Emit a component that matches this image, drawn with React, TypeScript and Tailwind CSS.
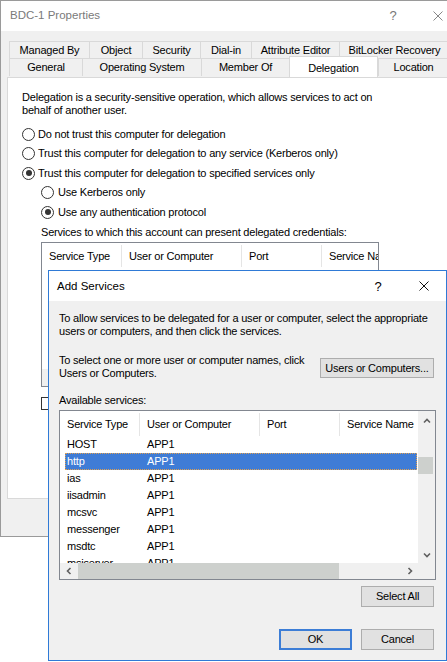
import React from "react";

const rows = [
  "HOST",
  "http",
  "ias",
  "iisadmin",
  "mcsvc",
  "messenger",
  "msdtc",
  "msiserver",
];

const Radio = ({ checked }: { checked?: boolean }) => (
  <span className="flex h-[13px] w-[13px] shrink-0 items-center justify-center rounded-full border border-[#333] bg-white">
    {checked && <span className="h-[6px] w-[6px] rounded-full bg-[#333]" />}
  </span>
);

const CloseIcon = () => (
  <svg width="10" height="10" viewBox="0 0 10 10">
    <path d="M0.5 0.5 L9.5 9.5 M9.5 0.5 L0.5 9.5" stroke="#111" strokeWidth="1" />
  </svg>
);

const Chevron = ({ dir }: { dir: "up" | "down" | "left" | "right" }) => {
  const d = {
    up: "M1 5.5 L4 2.5 L7 5.5",
    down: "M1 2.5 L4 5.5 L7 2.5",
    left: "M5.5 1 L2.5 4 L5.5 7",
    right: "M2.5 1 L5.5 4 L2.5 7",
  }[dir];
  return (
    <svg width="8" height="8" viewBox="0 0 8 8">
      <path d={d} fill="none" stroke="#606060" strokeWidth="1.6" />
    </svg>
  );
};

const Tab = ({ label, w, h }: { label: string; w: string; h: string }) => (
  <div
    className={`${w} ${h} flex shrink-0 items-center justify-center border-l border-t border-[#d9d9d9] whitespace-nowrap`}
  >
    {label}
  </div>
);

const Button = ({ label, w, primary }: { label: string; w: string; primary?: boolean }) => (
  <div
    className={`${w} flex h-[21px] items-center justify-center bg-[#e1e1e1] ${
      primary ? "border-2 border-[#3c7dd6]" : "border border-[#adadad]"
    }`}
  >
    {label}
  </div>
);

const columns = [
  ["Service Type", "w-[80px]"],
  ["User or Computer", "w-[120px]"],
  ["Port", "w-[80px]"],
  ["Service Name", "w-[80px]"],
];

export default function App() {
  return (
    <div className="relative h-[662px] w-[447px] overflow-hidden bg-white font-['Liberation_Sans',Arial,sans-serif] text-[11px] tracking-[-0.2px] text-black">
      {/* BDC-1 Properties */}
      <div className="flex h-[537px] w-[470px] flex-col border border-[#9a9a9a] bg-[#f0f0f0]">
        <div className="flex h-[30px] shrink-0 items-center bg-white pl-[9px] pr-[21px] text-[11.5px] tracking-normal text-[#7a7a7a]">
          BDC-1 Properties
          <div className="ml-auto flex items-center gap-[25px]">
            <span className="flex w-[20px] justify-center text-[13px] text-[#777]">?</span>
            <span className="flex w-[20px] justify-center opacity-50">
              <CloseIcon />
            </span>
          </div>
        </div>

        <div className="pl-[8px] pt-[10px]">
          <div className="flex">
            <Tab label="Managed By" w="w-[80px]" h="h-[17px]" />
            <Tab label="Object" w="w-[53px]" h="h-[17px]" />
            <Tab label="Security" w="w-[58px]" h="h-[17px]" />
            <Tab label="Dial-in" w="w-[51px]" h="h-[17px]" />
            <Tab label="Attribute Editor" w="w-[88px]" h="h-[17px]" />
            <Tab label="BitLocker Recovery" w="w-[110px]" h="h-[17px]" />
          </div>
          <div className="flex">
            <Tab label="General" w="w-[73px]" h="h-[18px]" />
            <Tab label="Operating System" w="w-[119px]" h="h-[18px]" />
            <Tab label="Member Of" w="w-[88px]" h="h-[18px]" />
            <div className="relative z-10 -mt-[2px] flex h-[21px] w-[89px] shrink-0 items-start justify-center border-x border-t border-[#d9d9d9] bg-white pt-[3px]">
              Delegation
            </div>
            <Tab label="Location" w="w-[70px]" h="h-[18px]" />
          </div>
        </div>

        <div className="ml-[6px] flex h-[422px] flex-col border border-[#d9d9d9] bg-white pl-[14px] pt-[13px] leading-[13px]">
          <p className="whitespace-nowrap">
            Delegation is a security-sensitive operation, which allows services to act on
            <br />
            behalf of another user.
          </p>
          <div className="mt-[7px] flex flex-col whitespace-nowrap">
            <label className="flex h-[20px] items-center gap-[3px]">
              <Radio />
              Do not trust this computer for delegation
            </label>
            <label className="flex h-[19px] items-center gap-[3px]">
              <Radio />
              Trust this computer for delegation to any service (Kerberos only)
            </label>
            <label className="flex h-[20px] items-center gap-[3px]">
              <Radio checked />
              Trust this computer for delegation to specified services only
            </label>
            <label className="ml-[19px] flex h-[19px] items-center gap-[4px]">
              <Radio />
              Use Kerberos only
            </label>
            <label className="ml-[19px] flex h-[20px] items-center gap-[4px]">
              <Radio checked />
              Use any authentication protocol
            </label>
          </div>

          <div className="ml-[19px] mt-[4px]">
            <div className="whitespace-nowrap">
              Services to which this account can present delegated credentials:
            </div>
            <div className="mt-[3px] flex h-[145px] w-[338px] flex-col overflow-hidden border border-[#828790]">
              <div className="flex h-[26px] whitespace-nowrap">
                {columns.map(([t, w]) => (
                  <div key={t} className={`${w} flex shrink-0 items-center overflow-hidden pl-[7px]`}>
                    <span className="flex h-[22px] flex-1 items-center border-r border-[#e5e5e5]">{t}</span>
                  </div>
                ))}
              </div>
              <div className="flex-1" />
              <div className="h-[17px] bg-[#f0f0f0]" />
            </div>
            <div className="mt-[10px] h-[13px] w-[13px] border border-[#333] bg-white" />
          </div>
        </div>
      </div>

      {/* Add Services dialog */}
      <div className="absolute left-[48px] top-[270px] flex h-[391px] w-[399px] flex-col border border-[#2f7ad6] bg-[#f0f0f0] leading-[13px]">
        <div className="flex h-[30px] shrink-0 items-center bg-white pl-[8px] pr-[12px] text-[11.5px] tracking-normal">
          Add Services
          <div className="ml-auto flex items-center gap-[26px]">
            <span className="flex w-[20px] justify-center text-[13px]">?</span>
            <span className="flex w-[20px] justify-center">
              <CloseIcon />
            </span>
          </div>
        </div>

        <div className="flex flex-1 flex-col px-[10px] pt-[11px]">
          <p className="whitespace-nowrap">
            To allow services to be delegated for a user or computer, select the appropriate
            <br />
            users or computers, and then click the services.
          </p>
          <div className="mt-[16px] flex items-start justify-between">
            <p className="whitespace-nowrap">
              To select one or more user or computer names, click
              <br />
              Users or Computers.
            </p>
            <div className="mr-[2px] mt-[4px] flex h-[20px] w-[114px] items-center justify-center border border-[#adadad] bg-[#e1e1e1]">
              Users or Computers...
            </div>
          </div>
          <div className="mt-[14px]">Available services:</div>

          <div className="mt-[3px] flex h-[170px] flex-col border border-[#828790] bg-white">
            <div className="flex flex-1 overflow-hidden">
              <div className="flex-1 overflow-hidden whitespace-nowrap">
                <div className="flex h-[25px]">
                  {columns.map(([t, w]) => (
                    <div key={t} className={`${w} flex shrink-0 items-end pl-[7px]`}>
                      <span className="flex h-[23px] flex-1 items-center border-r border-[#e5e5e5]">{t}</span>
                    </div>
                  ))}
                </div>
                {rows.map((r) => {
                  const sel = r === "http";
                  return (
                    <div
                      key={r}
                      className={`ml-[5px] mr-[1px] flex h-[17px] items-center ${
                        sel ? "bg-[#3f7cd6] text-white outline-1 -outline-offset-1 outline-dotted outline-[#e0a050]" : ""
                      }`}
                    >
                      <span className="w-[75px] shrink-0 pl-[2px]">{r}</span>
                      <span className="pl-[7px]">APP1</span>
                    </div>
                  );
                })}
              </div>
              <div className="flex w-[17px] shrink-0 flex-col bg-[#f0f0f0]">
                <div className="flex h-[19px] items-center justify-center">
                  <Chevron dir="up" />
                </div>
                <div className="mt-[27px] h-[17px] w-[15px] bg-[#cdd0cd]" />
                <div className="flex-1" />
                <div className="flex h-[17px] items-center justify-center">
                  <Chevron dir="down" />
                </div>
              </div>
            </div>
            <div className="flex h-[16px] shrink-0 bg-[#f0f0f0]">
              <div className="flex w-[17px] items-center justify-center">
                <Chevron dir="left" />
              </div>
              <div className="ml-[1px] w-[261px] bg-[#cdd0cd]" />
              <div className="flex-1" />
              <div className="flex w-[17px] items-center justify-center">
                <Chevron dir="right" />
              </div>
              <div className="w-[17px]" />
            </div>
          </div>

          <div className="mr-[2px] mt-[6px] self-end">
            <Button label="Select All" w="w-[73px]" />
          </div>
          <div className="mr-[2px] mt-[22px] flex gap-[9px] self-end">
            <Button label="OK" w="w-[73px]" primary />
            <Button label="Cancel" w="w-[73px]" />
          </div>
        </div>
      </div>
    </div>
  );
}
